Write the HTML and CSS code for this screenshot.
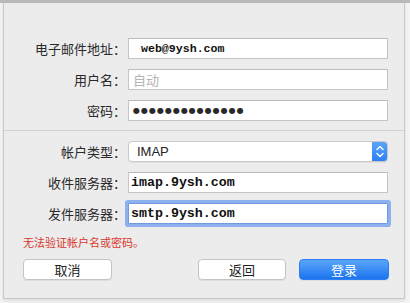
FILE: index.html
```html
<!DOCTYPE html>
<html lang="zh-CN">
<head>
<meta charset="utf-8">
<link rel="stylesheet" href="styles.css">
</head>
<body>
<div class="topbar"></div>
<div class="panel">
  <div class="rows">
    <div class="row">
      <label class="label">电子邮件地址：</label>
      <div class="field"><span class="val-sm">web@9ysh.com</span></div>
    </div>
    <div class="row">
      <label class="label">用户名：</label>
      <div class="field"><span class="placeholder">自动</span></div>
    </div>
    <div class="row">
      <label class="label">密码：</label>
      <div class="field"><span class="dots">●●●●●●●●●●●●●●</span></div>
    </div>
  </div>
  <div class="sep"></div>
  <div class="rows rows2">
    <div class="row">
      <label class="label">帐户类型：</label>
      <div class="select">
        <span class="sel-text">IMAP</span>
        <span class="stepper">
          <svg width="16" height="21" viewBox="0 0 16 21"><path d="M5 8.5 L8 5.5 L11 8.5" fill="none" stroke="#fff" stroke-width="1.4" stroke-linecap="round" stroke-linejoin="round"/><path d="M5 12.5 L8 15.5 L11 12.5" fill="none" stroke="#fff" stroke-width="1.4" stroke-linecap="round" stroke-linejoin="round"/></svg>
        </span>
      </div>
    </div>
    <div class="row">
      <label class="label">收件服务器：</label>
      <div class="field"><span class="val-lg">imap.9ysh.com</span></div>
    </div>
    <div class="row">
      <label class="label">发件服务器：</label>
      <div class="field focus"><span class="val-lg">smtp.9ysh.com</span></div>
    </div>
  </div>
  <p class="error">无法验证帐户名或密码。</p>
  <div class="buttons">
    <button class="btn btn-cancel">取消</button>
    <div class="right">
      <button class="btn btn-back">返回</button>
      <button class="btn btn-primary">登录</button>
    </div>
  </div>
</div>
</body>
</html>
```
FILE: styles.css
```css
* { box-sizing: border-box; }
html, body { margin: 0; padding: 0; }
body {
  width: 410px;
  height: 303px;
  background: #f3f3f3;
  font-family: "Noto Sans CJK SC", "Noto Sans", sans-serif;
  color: #222;
  overflow: hidden;
}
.topbar {
  height: 3px;
  background: #b9b9b9;
}
.panel {
  margin-left: 3px;
  width: 402px;
  height: 296px;
  background: #ececec;
  border-left: 1px solid #c9c9c9;
  border-right: 1px solid #c9c9c9;
  border-bottom: 1px solid #c4c4c4;
  box-shadow: 0 2px 3px rgba(0,0,0,0.08);
  padding-top: 35px;
}
.rows {
  display: flex;
  flex-direction: column;
  gap: 10px;
}
.row {
  display: grid;
  grid-template-columns: 122px 260px;
  column-gap: 2px;
  align-items: center;
  height: 21px;
}
.label {
  text-align: right;
  font-size: 13px;
  line-height: 21px;
  color: #2a2a2a;
  white-space: nowrap;
}
.field {
  height: 21px;
  background: #fff;
  border: 1px solid #c6c6c6;
  border-top-color: #bcbcbc;
  display: flex;
  align-items: center;
  padding-left: 4px;
}
.val-sm {
  font-family: "Liberation Mono", monospace;
  font-weight: bold;
  font-size: 11.6px;
  padding-left: 8px;
  color: #111;
}
.val-lg {
  font-family: "Liberation Mono", monospace;
  font-weight: bold;
  font-size: 13.3px;
  color: #111;
  margin-left: -2px;
}
.placeholder {
  font-size: 13px;
  color: #b4b4b4;
}
.dots {
  font-family: "DejaVu Sans", sans-serif;
  font-size: 8px;
  letter-spacing: 1px;
  color: #2a2a2a;
}
.sep {
  height: 1px;
  background: #d2d2d2;
  margin: 9px 0 10px;
}
.select {
  height: 21px;
  background: #fff;
  border: 1px solid #c8c8c8;
  border-radius: 4px;
  display: flex;
  align-items: center;
  justify-content: space-between;
  overflow: hidden;
  box-shadow: 0 1px 0 rgba(0,0,0,0.05);
}
.sel-text {
  font-family: "Liberation Sans", "Noto Sans", sans-serif;
  font-size: 13px;
  padding-left: 8px;
  color: #222;
}
.stepper {
  width: 16px;
  height: 21px;
  margin-right: -1px;
  background: linear-gradient(#5ea6fb, #2a7ff5);
  display: flex;
}
.focus {
  box-shadow: 0 0 0 3px #8db1ee;
  border-color: #6f9ae0;
  border-radius: 1px;
}
.error {
  margin: 12px 0 0 19px;
  font-size: 11px;
  line-height: 13px;
  color: #d9352b;
}
.buttons {
  display: flex;
  justify-content: space-between;
  padding: 0 15px 0 19px;
  margin-top: 10px;
}
.right {
  display: flex;
  gap: 13px;
}
.btn {
  height: 21px;
  border: 1px solid #c4c4c4;
  border-radius: 4px;
  background: #fff;
  font-family: "Noto Sans CJK SC", sans-serif;
  font-size: 13px;
  line-height: 19px;
  color: #222;
  padding: 0;
  box-shadow: 0 1px 0 rgba(0,0,0,0.06);
}
.btn-cancel { width: 89px; }
.btn-back { width: 88px; }
.btn-primary {
  width: 90px;
  color: #fff;
  border-color: #2b7ef0;
  background: linear-gradient(#5aa5fb, #1c73ee);
}
```
